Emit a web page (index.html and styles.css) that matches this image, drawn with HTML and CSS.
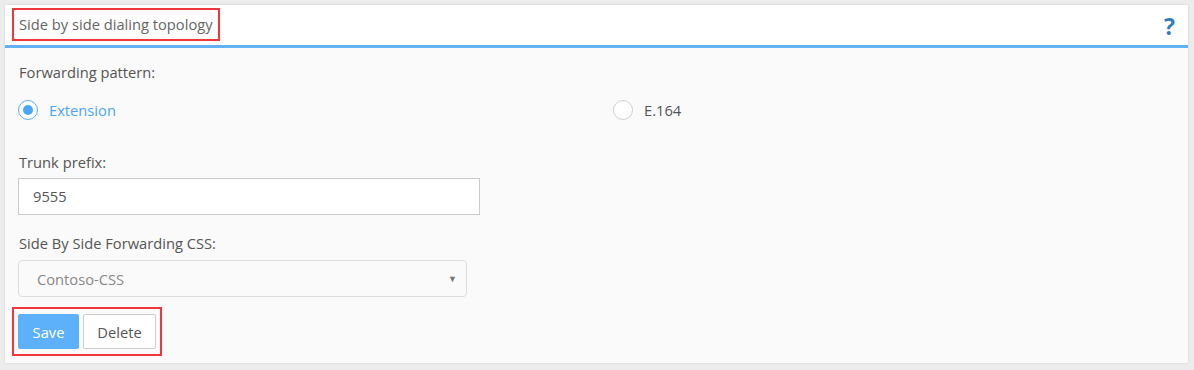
FILE: index.html
```html
<!DOCTYPE html>
<html>
<head>
<meta charset="utf-8">
<link rel="stylesheet" href="styles.css">
</head>
<body>
<div class="panel">
  <div class="panel-header">
    <span class="title">Side by side dialing topology</span>
    <span class="help">?</span>
  </div>
  <div class="panel-body">
    <div class="label first">Forwarding pattern:</div>
    <div class="radios">
      <label class="radio checked"><span class="dot"></span><span class="rtext">Extension</span></label>
      <label class="radio"><span class="dot"></span><span class="rtext">E.164</span></label>
    </div>
    <div class="label gap">Trunk prefix:</div>
    <div class="input">9555</div>
    <div class="label gap2">Side By Side Forwarding CSS:</div>
    <div class="select"><span>Contoso-CSS</span><span class="arrow">▼</span></div>
    <div class="buttons">
      <button class="btn save">Save</button>
      <button class="btn delete">Delete</button>
    </div>
  </div>
</div>
</body>
</html>
```
FILE: styles.css
```css
* { box-sizing: border-box; }
html, body { margin: 0; }
body {
  background: #ececec;
  padding: 5px 6px 7px 5px;
  font-family: "Open Sans", "Liberation Sans", sans-serif;
  font-size: 14.7px;
  color: #555;
}
.panel {
  background: #fafafa;
  height: 358px;
  box-shadow: 0 0 2px rgba(0,0,0,0.12);
}
.panel-header {
  background: #fff;
  height: 43px;
  border-bottom: 3px solid #62b1f3;
  display: flex;
  align-items: flex-start;
  justify-content: space-between;
  padding: 3px 13px 0 7px;
}
.title {
  border: 2px solid #f0383c;
  height: 33px;
  line-height: 29px;
  padding: 0 5px;
  color: #666;
}
.help {
  color: #2f7cbf;
  font-weight: 700;
  font-size: 23px;
  line-height: 22px;
  margin-top: 7px;
}
.panel-body {
  padding: 14px 13px 0 13px;
}
.label {
  line-height: 20px;
  padding-left: 1px;
  color: #555;
}
.radios {
  display: flex;
  margin-top: 18px;
  height: 20px;
}
.radio {
  display: flex;
  align-items: center;
  gap: 11px;
}
.radio:first-child { width: 595px; }
.dot {
  width: 20px;
  height: 20px;
  border-radius: 50%;
  border: 1px solid #cfcfcf;
  background: #fff;
  position: relative;
}
.radio.checked .dot { border-color: #5aaef2; }
.radio.checked .dot::after {
  content: "";
  position: absolute;
  left: 4px; top: 4px;
  width: 10px; height: 10px;
  border-radius: 50%;
  background: #4aa6f6;
}
.rtext { color: #555; line-height: 20px; }
.radio.checked .rtext { color: #4aa6f6; }
.gap { margin-top: 32px; }
.gap2 { margin-top: 18px; }
.input {
  margin-top: 6px;
  width: 462px;
  height: 37px;
  border: 1px solid #ccc;
  background: #fff;
  padding-left: 14px;
  line-height: 35px;
  color: #555;
}
.select {
  margin-top: 7px;
  width: 449px;
  height: 37px;
  border: 1px solid #ddd;
  border-radius: 4px;
  background: #fafafa;
  display: flex;
  justify-content: space-between;
  align-items: center;
  padding: 0 9px 0 18px;
  color: #888;
}
.arrow {
  font-size: 9px;
  color: #777;
}
.buttons {
  margin: 10px 0 0 -6px;
  display: inline-flex;
  gap: 4px;
  border: 2px solid #f0383c;
  padding: 5px 4px;
}
.btn {
  font-family: "Open Sans", "Liberation Sans", sans-serif;
  font-size: 14.7px;
  height: 35px;
  border-radius: 2px;
  cursor: pointer;
}
.save {
  width: 61px;
  background: #5cb1fa;
  border: 1px solid #5cb1fa;
  color: #fff;
}
.delete {
  width: 73px;
  background: #fff;
  border: 1px solid #ccc;
  color: #555;
}
```
